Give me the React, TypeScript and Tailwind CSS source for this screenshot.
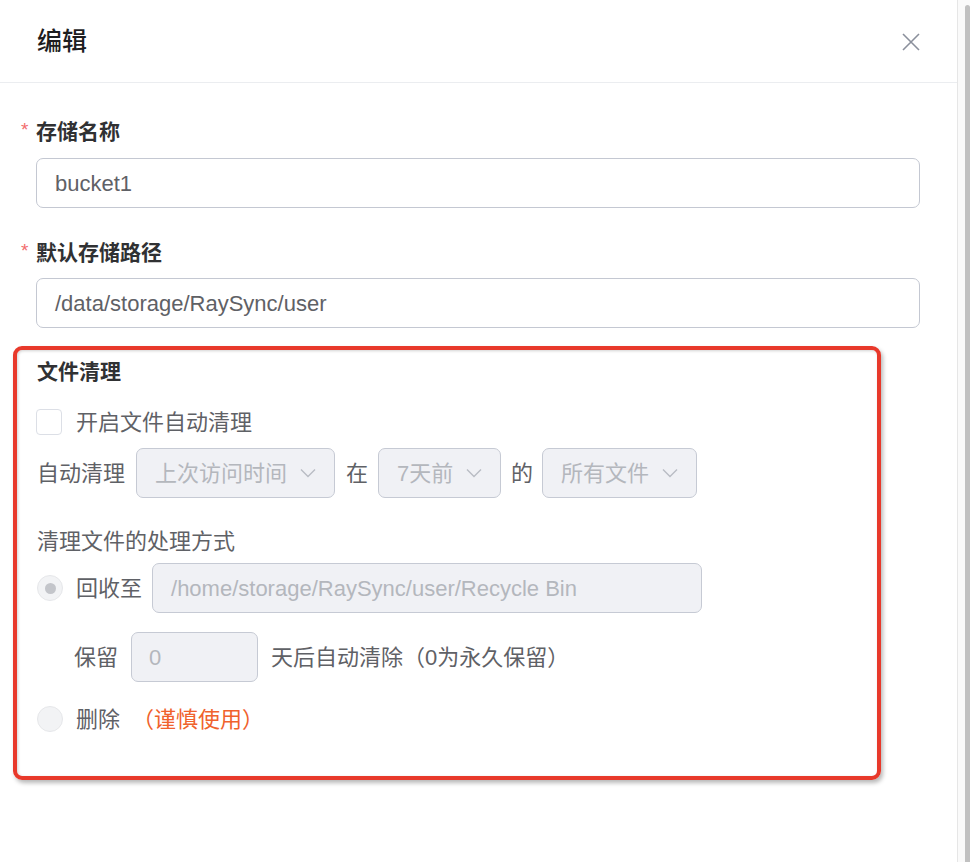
import React from "react";

const font = { fontFamily: '"Liberation Sans", "Noto Sans CJK SC", sans-serif' };

function Chevron() {
  return (
    <svg width="18" height="12" viewBox="0 0 18 12" fill="none" className="ml-auto shrink-0">
      <path d="M2 2.5 L9 9.5 L16 2.5" stroke="#b9bcc4" strokeWidth="1.4" />
    </svg>
  );
}

function Select({ label, className }: { label: string; className: string }) {
  return (
    <div
      className={`flex h-[50px] items-center rounded-[7px] border border-[#c6cad4] bg-[#f0f1f5] pl-[18px] pr-[17px] text-[22px] text-[#b4b7bd] ${className}`}
    >
      <span>{label}</span>
      <Chevron />
    </div>
  );
}

function Radio({ checked }: { checked?: boolean }) {
  return (
    <div className="flex h-[26px] w-[26px] shrink-0 items-center justify-center rounded-full border border-[#e6e7ea] bg-[#f2f3f5]">
      {checked && <div className="h-[11px] w-[11px] rounded-full bg-[#c3c5ca]" />}
    </div>
  );
}

function Label({ text }: { text: string }) {
  return (
    <div className="flex h-[30px] items-center text-[21px] font-semibold text-[#303133]">
      <span className="-ml-[15px] mb-[5px] w-[15px] text-[19px] font-normal leading-none text-[#f26d6d]">*</span>
      {text}
    </div>
  );
}

export default function App() {
  return (
    <div className="flex h-[862px] w-[970px] overflow-hidden bg-white" style={font}>
      {/* Drawer panel */}
      <div className="flex w-[958px] flex-col border-r border-[#e6e6e6]">
        <div className="flex h-[83px] shrink-0 items-center border-b border-[#ebedf0] pl-[37px] pr-[36px]">
          <h1 className="text-[25px] font-medium leading-none text-[#1d1d1f]">编辑</h1>
          <svg width="20" height="20" viewBox="0 0 20 20" className="ml-auto mt-[1px]">
            <path d="M2 2 L18 18 M18 2 L2 18" stroke="#8b909c" strokeWidth="1.6" />
          </svg>
        </div>

        <div className="pt-[34px]">
          <div className="px-[36px]">
            <Label text="存储名称" />
            <div className="mt-[11px] flex h-[50px] w-[884px] items-center rounded-[7px] border border-[#c4c8d2] pl-[18px] text-[22px] text-[#5f6166]">
              bucket1
            </div>

            <div className="mt-[30px]">
              <Label text="默认存储路径" />
            </div>
            <div className="mt-[10px] flex h-[50px] w-[884px] items-center rounded-[7px] border border-[#c4c8d2] pl-[18px] text-[22px] text-[#5f6166]">
              /data/storage/RaySync/user
            </div>
          </div>

          {/* File cleanup section (highlighted) */}
          <div className="ml-[13px] mt-[18px] h-[434px] w-[868px] rounded-[9px] border-[4px] border-[#e8392b] pl-[20px] pt-[7px] shadow-[2px_3px_4px_rgba(0,0,0,0.28),inset_1px_1px_3px_rgba(0,0,0,0.18)]">
            <div className="flex h-[30px] items-center text-[21px] font-semibold text-[#303133]">文件清理</div>

            <div className="mt-[20px] flex h-[30px] items-center gap-[14px] text-[22px] text-[#5f6166]">
              <div className="-ml-[1px] h-[26px] w-[26px] rounded-[4px] border border-[#dcdfe6] bg-white" />
              <span>开启文件自动清理</span>
            </div>

            <div className="mt-[11px] flex items-center text-[22px] text-[#5f6166]">
              <span>自动清理</span>
              <Select label="上次访问时间" className="ml-[11px] w-[199px]" />
              <span className="ml-[11px]">在</span>
              <Select label="7天前" className="ml-[10px] w-[123px]" />
              <span className="ml-[10px]">的</span>
              <Select label="所有文件" className="ml-[9px] w-[155px]" />
            </div>

            <div className="mt-[28px] flex h-[30px] items-center text-[22px] text-[#5f6166]">清理文件的处理方式</div>

            <div className="mt-[7px] flex items-center text-[22px] text-[#5f6166]">
              <Radio checked />
              <span className="ml-[13px]">回收至</span>
              <div className="ml-[10px] flex h-[50px] w-[550px] items-center rounded-[7px] border border-[#c6cad4] bg-[#f0f1f5] pl-[18px] text-[22px] text-[#b4b7bd]">
                /home/storage/RaySync/user/Recycle Bin
              </div>
            </div>

            <div className="mt-[19px] flex items-center pl-[37px] text-[22px] text-[#5f6166]">
              <span>保留</span>
              <div className="ml-[13px] flex h-[50px] w-[127px] items-center rounded-[7px] border border-[#c6cad4] bg-[#f0f1f5] pl-[17px] text-[22px] text-[#b4b7bd]">
                0
              </div>
              <span className="ml-[13px]">天后自动清除（0为永久保留）</span>
            </div>

            <div className="mt-[22px] flex h-[30px] items-center text-[22px] text-[#5f6166]">
              <Radio />
              <span className="ml-[13px]">删除</span>
              <span className="ml-[12px] text-[#f0622d]">（谨慎使用）</span>
            </div>
          </div>
        </div>
      </div>

      {/* Scrollbar */}
      <div className="flex w-[12px] bg-[#fafafa] pl-[7px] pt-[5px]">
        <div className="h-full w-[5px] rounded-t-[3px] bg-[#c1c1c1]" />
      </div>
    </div>
  );
}
